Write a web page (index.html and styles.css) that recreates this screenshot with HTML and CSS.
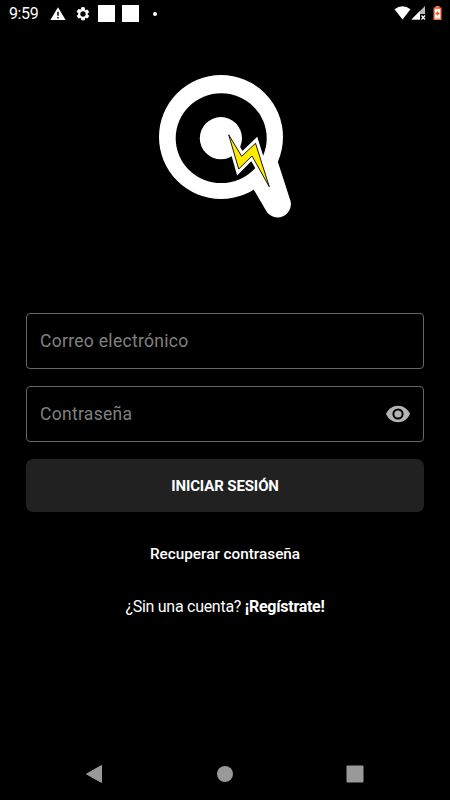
FILE: index.html
```html
<!DOCTYPE html>
<html lang="es">
<head>
<meta charset="utf-8">
<title>Iniciar sesión</title>
<link rel="stylesheet" href="styles.css">
</head>
<body>
<header class="status">
  <span class="clock">9:59</span>
  <svg class="warn" width="16" height="14" viewBox="0 0 16 14"><path fill="#fff" d="M8 .3 15.600 13H.4z"/><path stroke="#000" stroke-width="1.500" d="M8 4.700v4M8 10v1.600"/></svg>
  <svg class="gear" width="16" height="16" viewBox="0 0 24 24"><path fill="#fff" stroke="#fff" stroke-width="1.500" d="M19.400 13a7.500 7.500 0 0 0 0-2l2.100-1.600-2-3.500-2.500 1a7.700 7.700 0 0 0-1.700-1L14.900 2.500h-4l-.5 2.600a7.700 7.700 0 0 0-1.700 1l-2.400-1-2 3.500L6.500 11a7.500 7.500 0 0 0 0 2l-2.100 1.600 2 3.500 2.400-1a7.700 7.700 0 0 0 1.700 1l.5 2.700h4l.4-2.700a7.700 7.700 0 0 0 1.700-1l2.400 1 2-3.500z" transform="translate(-1)"/><circle cx="12" cy="12" r="4" fill="#000"/></svg>
  <span class="block"></span>
  <span class="block"></span>
  <span class="dot"></span>
  <svg class="signals" width="50" height="16" viewBox="0 0 50 16"><path fill="#fff" d="M.5 3.300Q8.500-2.700 16.500 3.300L8.500 13.500z"/><path fill="#bbb" d="M17.500 13.500 31 0v8h-5v5.500z"/><path fill="#fff" d="m17.500 13.500 8.500-8.500v8.500z"/><path fill="none" stroke="#fff" stroke-width="1.200" d="m27.500 9.500 3.500 4m0-4-3.500 4"/><path fill="#ff7043" d="M39.500 1.500h2V0h4v1.500h2V14h-8z"/><path fill="#fff" d="M40.800 3h5.400v9.500h-5.400z"/><path stroke="#f4511e" stroke-width="1.300" d="M43.500 5.500v4M41.500 7.500h4"/></svg>
</header>
<main>
  <svg class="logo" width="134" height="144" viewBox="158 74 134 144">
    <path fill="#fff" d="M275 153 289.700 198.500A13 13 0 0 1 265.400 209.500L251 185z"/>
    <circle cx="221" cy="137" r="62" fill="#fff"/>
    <ellipse cx="221.200" cy="138.200" rx="45.500" ry="44.900"/>
    <circle cx="220.900" cy="138.200" r="21.100" fill="#fff"/>
    <path fill="none" stroke="#fff" stroke-width="6.400" d="m228.700 134 13 22 14-13.300 14 44.600L252 156l-13.300 13.300z"/>
    <path fill="#ffeb00" stroke="#000" stroke-width=".9" d="m228.700 134.800 13 21.500 13.800-13 13.800 43.500L252 156l-13.300 13z"/>
  </svg>
  <form class="login">
    <div class="field"><span class="mail">Correo electrónico</span></div>
    <div class="field"><span class="password">Contraseña</span>
      <svg width="26" height="18" viewBox="0 0 26 18"><path fill="#b3b3b3" d="M1 9C3.300 3.800 7.700.8 13 .8S22.700 3.800 25 9c-2.300 5.200-6.700 8.200-12 8.200S3.300 14.200 1 9z"/><circle cx="13" cy="9" r="4.600" fill="#b3b3b3" stroke="#000" stroke-width="2"/></svg>
    </div>
    <div class="submit"><span>INICIAR SESIÓN</span></div>
  </form>
  <div class="recover">Recuperar contraseña</div>
  <div class="register">¿Sin una cuenta? <b>¡Regístrate!</b></div>
</main>
<nav>
  <svg width="18" height="20" viewBox="0 0 18 20"><path fill="#999" d="M16.500 1.500v17L1.500 10z" stroke="#999" stroke-linejoin="round"/></svg>
  <svg width="18" height="18" viewBox="0 0 18 18"><circle cx="9" cy="9" r="8" fill="#999"/></svg>
  <svg width="18" height="18" viewBox="0 0 18 18"><rect x=".5" y=".5" width="17" height="17" rx="1" fill="#999"/></svg>
</nav>
</body>
</html>
```
FILE: styles.css
```css
* { box-sizing: border-box; }
body {
  margin: 0;
  width: 450px;
  height: 800px;
  overflow: hidden;
  display: flex;
  flex-direction: column;
  background: #000;
  color: #fff;
  font-family: Roboto, sans-serif;
}
svg { display: block; flex: none; }
.status { display: flex; align-items: center; height: 27px; padding: 0 6px 0 9px; }
.clock { width: 41px; font-size: 16px; line-height: 26px; letter-spacing: -.4px; }
.gear { margin: 0 7px 0 9px; }
.block { width: 17px; height: 17px; margin-right: 7px; background: #fff; }
.dot { width: 4px; height: 4px; margin-left: 7px; border-radius: 50%; background: #fff; }
.signals { margin-left: auto; }
main { flex: 1; padding: 47px 26px 0; }
.logo { margin-left: 132px; }
.login { display: flex; flex-direction: column; gap: 17px; margin-top: 95px; }
.field {
  display: flex;
  align-items: center;
  justify-content: space-between;
  height: 56px;
  padding: 0 12.500px 0 13px;
  border: 1px solid #666;
  border-radius: 4px;
  color: #808080;
  font-size: 17.500px;
  letter-spacing: .3px;
}
.submit {
  display: flex;
  align-items: center;
  justify-content: center;
  height: 53px;
  border-radius: 7px;
  background: #212121;
  font-size: 15px;
  font-weight: 700;
  letter-spacing: -.12px;
}
.recover { margin-top: 32px; text-align: center; font-size: 15.300px; font-weight: 500; line-height: 20px; }
.register { margin-top: 32px; text-align: center; font-size: 16px; line-height: 22px; letter-spacing: -.28px; }
nav { display: flex; align-items: center; justify-content: space-between; height: 53px; padding: 0 86px 0 85px; }
```
